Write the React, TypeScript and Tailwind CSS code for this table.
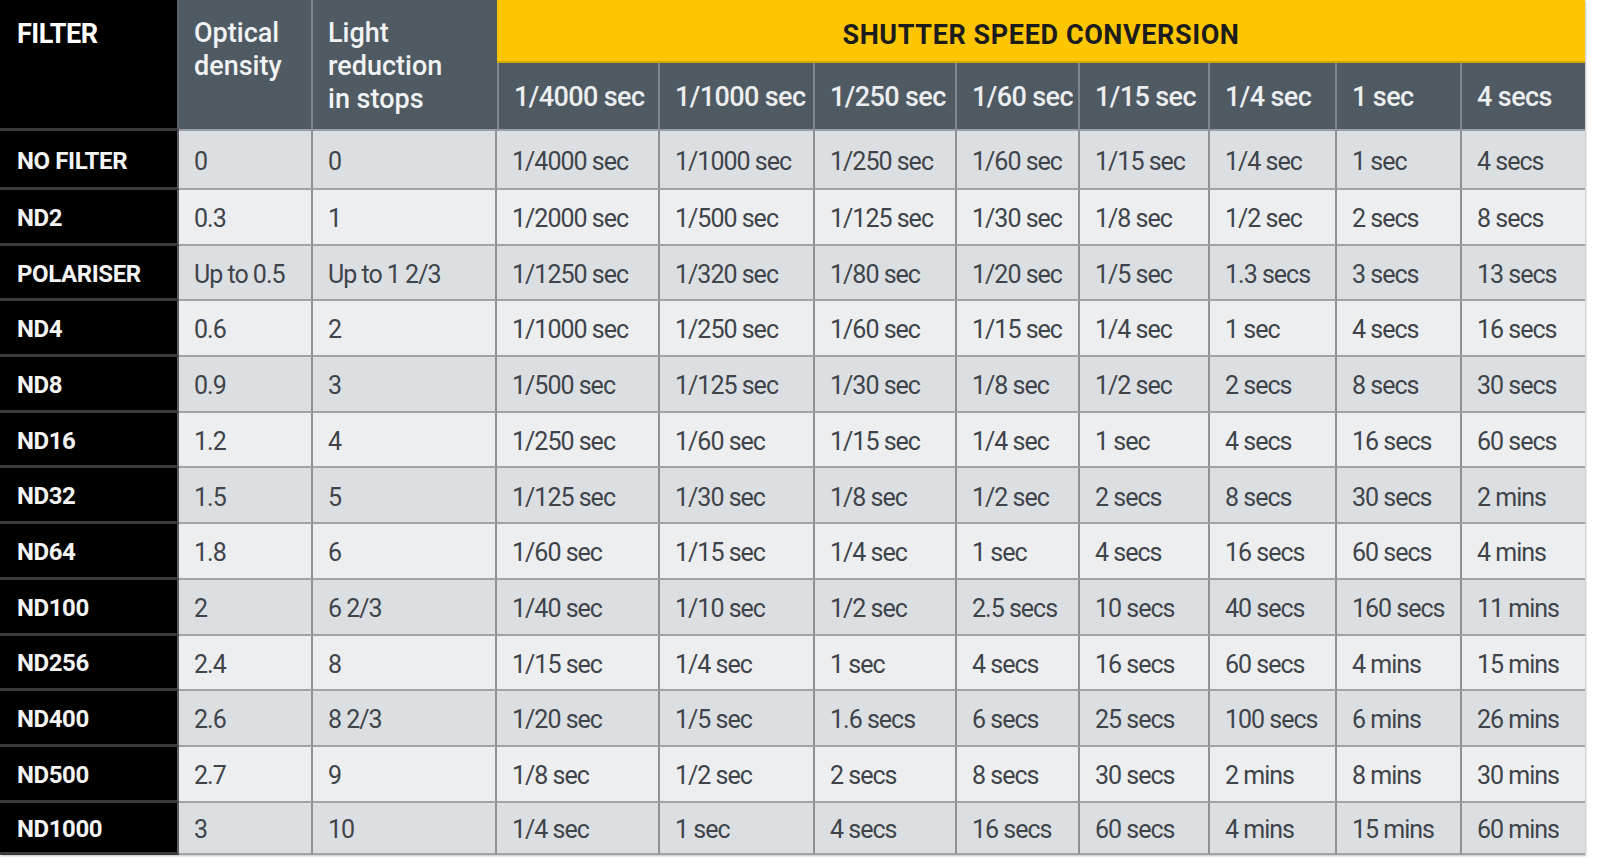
import React from "react";

const rows: string[][] = [
  ["NO FILTER", "0", "0", "1/4000 sec", "1/1000 sec", "1/250 sec", "1/60 sec", "1/15 sec", "1/4 sec", "1 sec", "4 secs"],
  ["ND2", "0.3", "1", "1/2000 sec", "1/500 sec", "1/125 sec", "1/30 sec", "1/8 sec", "1/2 sec", "2 secs", "8 secs"],
  ["POLARISER", "Up to 0.5", "Up to 1 2/3", "1/1250 sec", "1/320 sec", "1/80 sec", "1/20 sec", "1/5 sec", "1.3 secs", "3 secs", "13 secs"],
  ["ND4", "0.6", "2", "1/1000 sec", "1/250 sec", "1/60 sec", "1/15 sec", "1/4 sec", "1 sec", "4 secs", "16 secs"],
  ["ND8", "0.9", "3", "1/500 sec", "1/125 sec", "1/30 sec", "1/8 sec", "1/2 sec", "2 secs", "8 secs", "30 secs"],
  ["ND16", "1.2", "4", "1/250 sec", "1/60 sec", "1/15 sec", "1/4 sec", "1 sec", "4 secs", "16 secs", "60 secs"],
  ["ND32", "1.5", "5", "1/125 sec", "1/30 sec", "1/8 sec", "1/2 sec", "2 secs", "8 secs", "30 secs", "2 mins"],
  ["ND64", "1.8", "6", "1/60 sec", "1/15 sec", "1/4 sec", "1 sec", "4 secs", "16 secs", "60 secs", "4 mins"],
  ["ND100", "2", "6 2/3", "1/40 sec", "1/10 sec", "1/2 sec", "2.5 secs", "10 secs", "40 secs", "160 secs", "11 mins"],
  ["ND256", "2.4", "8", "1/15 sec", "1/4 sec", "1 sec", "4 secs", "16 secs", "60 secs", "4 mins", "15 mins"],
  ["ND400", "2.6", "8 2/3", "1/20 sec", "1/5 sec", "1.6 secs", "6 secs", "25 secs", "100 secs", "6 mins", "26 mins"],
  ["ND500", "2.7", "9", "1/8 sec", "1/2 sec", "2 secs", "8 secs", "30 secs", "2 mins", "8 mins", "30 mins"],
  ["ND1000", "3", "10", "1/4 sec", "1 sec", "4 secs", "16 secs", "60 secs", "4 mins", "15 mins", "60 mins"],
];

const speeds = ["1/4000 sec", "1/1000 sec", "1/250 sec", "1/60 sec", "1/15 sec", "1/4 sec", "1 sec", "4 secs"];

export default function App() {
  return (
    <div className="min-h-screen bg-white">
      <div
        className="grid w-[1585px] grid-cols-[179px_134px_184px_163px_155px_142px_123px_130px_127px_125px_123px] grid-rows-[63px_68px_59px_repeat(11,55.7px)_52px] shadow-[1px_1px_2px_rgba(0,0,0,0.25)]"
        style={{ fontFamily: "Roboto, 'Liberation Sans', sans-serif" }}
      >
        <div className="row-span-2 bg-black pl-[17px] pt-[18px] text-[27px] font-bold leading-[32px] tracking-[-0.5px] text-white border-b-[3px] border-b-[#3a3a3a] border-r-2 border-r-[#5a6168]">
          FILTER
        </div>
        <div className="row-span-2 bg-[#505a63] pl-[15px] pt-[17px] text-[27px] font-medium leading-[33px] text-[#f1f2f3] border-r-2 border-r-[#7f878e] border-b-2 border-b-[#9aa0a5]">
          Optical
          <br />
          density
        </div>
        <div className="row-span-2 bg-[#505a63] pl-[15px] pt-[17px] text-[27px] font-medium leading-[33px] text-[#f1f2f3] border-b-2 border-b-[#9aa0a5]">
          Light
          <br />
          reduction
          <br />
          in stops
        </div>
        <div className="col-span-8 flex items-center justify-center bg-[#fec600] pt-[9px] text-[27px] font-bold tracking-[0.6px] text-[#1c1c1c] border-b-2 border-b-[#d4a600]">
          SHUTTER SPEED CONVERSION
        </div>
        {speeds.map((s, i) => (
          <div
            key={s}
            className={`flex items-center bg-[#505a63] pl-[15px] pt-[2px] text-[27px] font-medium tracking-[-0.6px] text-[#eceef0] border-b-2 border-b-[#9aa0a5] ${
              i < 7 ? "border-r-2 border-r-[#7f878e]" : ""
            } ${i === 0 ? "border-l-2 border-l-[#7f878e]" : ""}`}
          >
            {s}
          </div>
        ))}
        {rows.map((r, ri) =>
          r.map((c, ci) =>
            ci === 0 ? (
              <div
                key={`${ri}-${ci}`}
                className="flex items-center bg-black pl-[17px] pt-[3px] text-[24px] font-bold tracking-[-0.4px] text-[#f4f4f4] border-b-[3px] border-b-[#3a3a3a] border-r-2 border-r-[#5a6168]"
              >
                {c}
              </div>
            ) : (
              <div
                key={`${ri}-${ci}`}
                className={`flex items-center pl-[15px] pt-[4px] text-[25px] tracking-[-1px] text-[#3f444a] border-b-2 border-b-[#a0a4a8] ${
                  ci < 10 ? "border-r-2 border-r-[#8d9297]" : ""
                } ${ri % 2 === 0 ? "bg-[#dcdfe2]" : "bg-[#eceef0]"}`}
              >
                {c}
              </div>
            )
          )
        )}
      </div>
    </div>
  );
}
